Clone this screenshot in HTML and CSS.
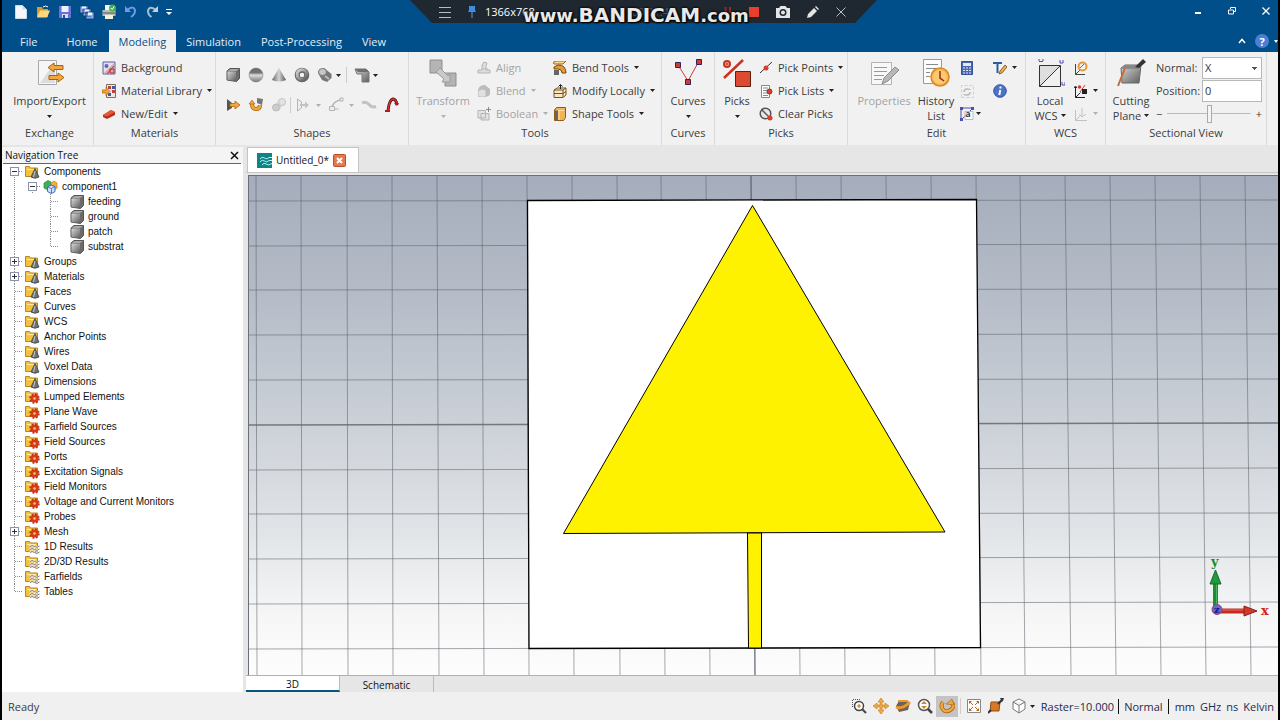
FILE: index.html
```html
<!DOCTYPE html>
<html lang="en">
<head>
<meta charset="utf-8">
<title>Untitled_0* - Modeling</title>
<link rel="stylesheet" href="styles.css">
</head>
<body>
<svg class="defs" aria-hidden="true">
  <defs>
    <linearGradient id="metal" x1="0" y1="0" x2="1" y2="1"><stop offset="0" stop-color="#d8d8d8"/><stop offset="1" stop-color="#5e5e5e"/></linearGradient>
    <linearGradient id="metalH" x1="0" y1="0" x2="1" y2="0"><stop offset="0" stop-color="#666"/><stop offset=".5" stop-color="#d4d4d4"/><stop offset="1" stop-color="#555"/></linearGradient>
    <linearGradient id="metalV" x1="0" y1="0" x2="0" y2="1"><stop offset="0" stop-color="#666"/><stop offset=".35" stop-color="#777"/><stop offset=".5" stop-color="#ddd"/><stop offset="1" stop-color="#777"/></linearGradient>
  </defs>
  <symbol id="j-line" viewBox="0 0 18 15"><path d="M9.500 0v15" class="dots"/></symbol>
  <symbol id="j-mid" viewBox="0 0 18 15"><path d="M9.500 0v15M10 7.500h8" class="dots"/></symbol>
  <symbol id="j-end" viewBox="0 0 18 15"><path d="M9.500 0v8M10 7.500h8" class="dots"/></symbol>
  <symbol id="j-plus" viewBox="0 0 18 15"><path d="M9.500 0v15M14 7.500h4" class="dots"/><rect x="5.500" y="3.500" width="8" height="8" fill="#fff" stroke="#8c93a8"/><path d="M7 7.500h5M9.500 5v5" stroke="#333"/></symbol>
  <symbol id="j-minus" viewBox="0 0 18 15"><path d="M9.500 11v4M14 7.500h4" class="dots"/><rect x="5.500" y="3.500" width="8" height="8" fill="#fff" stroke="#8c93a8"/><path d="M7 7.500h5" stroke="#333"/></symbol>
  <symbol id="folder" viewBox="0 0 15 14"><path d="M.5 11.500v-10h4l1 1.500h7v8.500z" fill="#f2c23e" stroke="#b98622"/><path d="M2 4.500h9" stroke="#ffe9a0"/></symbol>
  <symbol id="f-shape" viewBox="0 0 15 14"><use href="#folder"/><path d="M10 3.500L14 12q-4 2.500-8 0z" fill="#6f7276" stroke="#3e4043" stroke-width=".8"/><path d="M10 6l-1.500 6" stroke="#c9c9c9"/></symbol>
  <symbol id="f-gear" viewBox="0 0 15 14"><use href="#folder"/><circle cx="9.500" cy="8.500" r="4" fill="#d83a18" stroke="#c03014" stroke-width="2.500" stroke-dasharray="1.700 1.440"/><circle cx="9.500" cy="8.500" r="3.500" fill="#d83a18"/><circle cx="9.500" cy="8.500" r="1.300" fill="#f8c47a"/></symbol>
  <symbol id="f-wave" viewBox="0 0 15 14"><use href="#folder"/><path d="M5 6.500q2-2 4.500 0t5-.5M5 9.500q2-2 4.500 0t5-.5M5 12.500q2-2 4.500 0t5-.5" fill="none" stroke="#fff" stroke-width="2"/><path d="M5 6.500q2-2 4.500 0t5-.5M5 9.500q2-2 4.500 0t5-.5M5 12.500q2-2 4.500 0t5-.5" fill="none" stroke="#77706a"/></symbol>
  <symbol id="cube" viewBox="0 0 14 14"><path d="M1 3l3-2.500h9.500v10L10.500 13.500 1 12z" fill="#6c6c6c" stroke="#555"/><path d="M1.500 3.500h8.500v9.500L1.500 11.800z" fill="url(#metal)"/><path d="M2 3l2.500-2H13L10 3z" fill="#a9a9a9"/></symbol>
  <symbol id="comp" viewBox="0 0 15 14"><path d="M1 3l4-2.500L8 2v6L4 9.500 1 8z" fill="#3fae56" stroke="#2a8440" stroke-width=".7"/><path d="M8 3l3-2 3 2v5l-3 2-3-2z" fill="#f2ae3e" stroke="#c27f1c" stroke-width=".7"/><path d="M4.500 7l3.500-2 4 1.500v5L8.500 13.500l-4-2z" fill="#cfe0fa" stroke="#3a6cc0"/><path d="M4.500 7l4 1.500v5M8.500 8.500l3.500-2" fill="none" stroke="#3a6cc0" stroke-width=".8"/></symbol>
  <symbol id="caret" viewBox="0 0 5 3"><path d="M0 0h5L2.500 3z" fill="currentColor"/></symbol>
</svg>

<header class="title">
  <div class="quick">
    <button aria-label="New"><svg width="14" height="16"><path d="M1.500 1.500h7l4 4v9h-11z" fill="#f4f7fb" stroke="#cdd9e8"/><path d="M8.500 1.500v4h4" fill="#c9d6e6"/></svg></button>
    <button aria-label="Open"><svg width="16" height="16"><path d="M2 13V3h5l1 2h5v8z" fill="#d89a2c"/><path d="M2 13.500l3-7h10l-3 7z" fill="#ffd77c"/><path d="M8 3q3-2 5 0" fill="none" stroke="#fff"/></svg></button>
    <button aria-label="Save"><svg width="16" height="16"><path d="M2 2h12v12H2z" fill="#6870d4"/><path d="M4.500 2h7v6h-7z" fill="#eef1ff"/><path d="M5 10h6v4H5z" fill="#d9dcf4"/><path d="M6 11h2v3H6z" fill="#3b3f96"/></svg></button>
    <button aria-label="Save all"><svg width="16" height="16"><path d="M1 2h8v7H1zM4 5h8v7H4zM7 8h8v7H7z" fill="#8ea4e8" stroke="#003f75" stroke-width=".8"/><path d="M3 2.500h4v2H3zM6 5.500h4v2H6zM9 8.500h4v3H9z" fill="#f0f4ff"/></svg></button>
    <button aria-label="Print"><svg width="16" height="16"><path d="M4 1h8v6H4z" fill="#f2f5f8"/><path d="M1.500 6h13v6h-13z" fill="#b7bdb9"/><path d="M2 9h12" stroke="#4c5452"/><path d="M4 11h8v4H4z" fill="#f5efd8"/><circle cx="11.500" cy="4" r="3.500" fill="#45b14c"/><path d="M9.800 4l1.400 1.500 2-3" fill="none" stroke="#fff"/></svg></button>
    <button aria-label="Undo"><svg width="16" height="16"><path d="M4 6q7-5 8 0.500 0 4-4 6.500" fill="none" stroke="#6c9bea" stroke-width="2"/><path d="M2 2v6h6z" fill="#6c9bea"/></svg></button>
    <button aria-label="Redo"><svg width="16" height="16"><path d="M11 6Q4 1 3 7q0 4 3.500 6" fill="none" stroke="#a9bccb" stroke-width="2"/><path d="M13 2v6H7z" fill="#c3d2dd"/></svg></button>
    <button class="tiny" aria-label="Customize toolbar"><svg width="6" height="8"><path d="M0 1.500h6" stroke="#fff"/><path d="M0 4h6L3 7z" fill="#fff"/></svg></button>
  </div>
  <div class="window-buttons">
    <button aria-label="Minimize"><svg width="10" height="10"><path d="M2 7h6" stroke="#fff" stroke-width="2"/></svg></button>
    <button aria-label="Restore"><svg width="10" height="10"><path d="M3.500 3V1.500h5v4H7M1.500 4h5v4h-5z" fill="none" stroke="#fff"/></svg></button>
    <button aria-label="Close"><svg width="10" height="10"><path d="M1.500 1.500l7 7M8.500 1.500l-7 7" stroke="#fff" stroke-width="1.300"/></svg></button>
  </div>
  <div class="recorder">
    <button aria-label="Recorder menu"><svg width="12" height="12"><path d="M0 1.500h12M0 6.500h12M0 11.500h12" stroke="#b8bcc0"/></svg></button>
    <button aria-label="Pin"><svg width="8" height="12"><path d="M1 0h6v4l1 2H0l1-2z" fill="#3f8fe0"/><path d="M4 6v6" stroke="#5aa4ec"/></svg></button>
    <span class="size">1366x768</span>
    <span class="timer">00:01:45</span>
    <span class="rec-space"></span>
    <button aria-label="Pause"><svg width="8" height="10"><path d="M1.500 0v6M6 0v6" stroke="#9c2622" stroke-width="2"/></svg></button>
    <button aria-label="Stop"><svg width="10" height="10"><path d="M0 0h10v10H0z" fill="#e8402a"/></svg></button>
    <button aria-label="Take picture"><svg width="14" height="12"><path d="M0 2h3l1.500-2h5L11 2h3v10H0z" fill="#e3e5e7"/><circle cx="7" cy="6.500" r="3.500" fill="#1f2730"/><circle cx="7" cy="6.500" r="2" fill="#e3e5e7"/></svg></button>
    <button aria-label="Draw"><svg width="12" height="12"><path d="M0 12l1-4 6-6 3 3-6 6zM8 1l1-1 3 3-1 1z" fill="#e3e5e7"/></svg></button>
    <button aria-label="Close recorder"><svg width="10" height="10"><path d="M.5.500l9 9M9.500.500l-9 9" stroke="#b8bcc0"/></svg></button>
  </div>
  <div class="watermark"><span>www.</span><b>BANDICAM</b><span>.com</span></div>
</header>

<nav class="tabs">
  <button class="file">File</button><button class="home">Home</button><button class="on">Modeling</button><button>Simulation</button><button>Post-Processing</button><button>View</button>
  <div class="help">
    <button aria-label="Collapse ribbon"><svg width="8" height="6"><path d="M1 5l3-3.500L7 5" fill="none" stroke="#fff" stroke-width="1.500"/></svg></button>
    <button class="round" aria-label="Help">?</button>
    <button aria-label="Help menu"><svg width="4" height="3"><path d="M0 0h4L2 3z" fill="#fff"/></svg></button>
  </div>
</nav>

<section class="ribbon" aria-label="Modeling">
  <div class="group first">
    <div class="tools mid">
      <button class="big wide"><svg width="30" height="30"><path d="M3.500 2.500h18v24h-18z" fill="#f6f6f6" stroke="#a9a9a9"/><path d="M5 25l15-21v21z" fill="#dcdcdc"/><path d="M28 7.500H19V5l-6 4.500 6 4.500v-2.500h9zM14 17.500h9V15l6 4.500-6 4.500v-2.500h-9z" fill="#f4a63c" stroke="#a8640f"/></svg>Import/Export<svg class="caret"><use href="#caret"/></svg></button>
    </div>
    <h2>Exchange</h2>
  </div>

  <div class="group">
    <div class="tools pad8">
      <div class="col">
        <button class="row"><svg width="14" height="14"><path d="M1 1h12v12H1z" fill="#dfe2f6" stroke="#5a5f9a"/><path d="M2 12L12 2v10z" fill="#e7a2a2"/><circle cx="4.500" cy="5" r="2" fill="#6067b4"/><path d="M5 13l7-8" stroke="#b03434"/><path d="M8 8h4v4H8z" fill="none" stroke="#b03434"/></svg>Background</button>
        <button class="row"><svg width="14" height="14"><path d="M4.500.500h9v13h-9z" fill="#efe9e2" stroke="#7d6c60"/><path d="M6 2h3v3H6zM10 6h3v3h-3z" fill="#b9433c"/><path d="M10 2h3v3h-3zM6 9h3v3H6z" fill="#4b5597"/><path d="M0 6h4V3.500L8 7.500l-4 4V9H0z" fill="#f2a338" stroke="#a8640f" stroke-width=".7"/></svg>Material Library<svg class="caret"><use href="#caret"/></svg></button>
        <button class="row"><svg width="14" height="14"><path d="M1 8l8-5 4 2v3l-8 4-4-2z" fill="#b72e16"/><path d="M1 8l8-5 4 2-8 4.500z" fill="#e8593a"/></svg>New/Edit<svg class="caret"><use href="#caret"/></svg></button>
      </div>
    </div>
    <h2>Materials</h2>
  </div>

  <div class="group">
    <div class="tools stack">
      <div class="icons">
        <button aria-label="Brick"><svg width="14" height="14"><use href="#cube"/></svg></button>
        <button aria-label="Sphere"><svg width="16" height="16"><circle cx="8" cy="8" r="7" fill="url(#metalV)" stroke="#777" stroke-width=".5"/></svg></button>
        <button aria-label="Cone"><svg width="16" height="16"><path d="M8 1l7 12q-7 3-14 0z" fill="url(#metalH)"/></svg></button>
        <button aria-label="Torus"><svg width="16" height="16"><circle cx="8" cy="8" r="4.800" fill="none" stroke="#666" stroke-width="5"/><circle cx="8" cy="7.500" r="4.800" fill="none" stroke="url(#metal)" stroke-width="3"/></svg></button>
        <button aria-label="Cylinder"><svg width="16" height="16"><path d="M2 3.500L7 1l7.500 6v4l-4.500 4-5-2-3.500-6z" fill="#777"/><ellipse cx="5.500" cy="5" rx="4" ry="3.500" fill="#c7c7c7" stroke="#777"/><path d="M8 9l4 3" stroke="#bbb" stroke-width="2"/></svg></button>
        <button class="drop" aria-label="More shapes"><svg class="caret"><use href="#caret"/></svg></button>
        <i></i>
        <button aria-label="Bend"><svg width="16" height="16"><path d="M1 2h11l3 3v10H8V7H3z" fill="url(#metal)" stroke="#777"/><path d="M1 2h11l3 3H4z" fill="#6e6e6e"/></svg></button>
        <button class="drop" aria-label="More bends"><svg class="caret"><use href="#caret"/></svg></button>
      </div>
      <div class="icons second">
        <button aria-label="Extrude"><svg width="16" height="16"><path d="M2 2l5 4v5l-5 3z" fill="#555"/><path d="M5 6.500h5V4l5 4-5 4V9.500H5z" fill="#f4a63c" stroke="#a8640f" stroke-width=".8"/></svg></button>
        <button aria-label="Rotate"><svg width="16" height="16"><path d="M9 1l6 1-1 6-5-2z" fill="#777"/><path d="M12 8q0 4-4 4T4 7" fill="none" stroke="#a8640f" stroke-width="4"/><path d="M12 8q0 4-4 4T4 7" fill="none" stroke="#f4a63c" stroke-width="2.500"/><path d="M1 7l3-4 3 4z" fill="#f4a63c" stroke="#a8640f" stroke-width=".6"/></svg></button>
        <button aria-label="Loft" disabled><svg width="16" height="16"><path d="M2 10l7-8 5 3-6 9z" fill="#dadada"/><circle cx="5" cy="10.500" r="3.500" fill="#ccc" stroke="#bbb"/><circle cx="11" cy="5" r="3.500" fill="#e2e2e2" stroke="#c4c4c4"/></svg></button>
        <i></i>
        <button aria-label="Face extrude" disabled><svg width="14" height="14"><path d="M1.500 1v12l4-3V4z" fill="#eee" stroke="#b4b4b4"/><path d="M4 6h5V3.500L13 7l-4 3.500V8H4z" fill="#c2c2c2"/></svg></button>
        <button class="drop" disabled aria-label="More extrusions"><svg class="caret"><use href="#caret"/></svg></button>
        <button aria-label="Sweep curve" disabled><svg width="16" height="16"><path d="M4 11q1-7 9-8" fill="none" stroke="#b4b4b4" stroke-width="1.500"/><path d="M12 1h3v3h-3zM1.500 9.500h5v4h-5zM6.500 12h4" fill="#eee" stroke="#b4b4b4"/></svg></button>
        <button class="drop" disabled aria-label="More sweeps"><svg class="caret"><use href="#caret"/></svg></button>
        <button aria-label="Trace" disabled><svg width="16" height="16"><path d="M1 6q4-2 7 1.500t7 2" fill="none" stroke="#c2c2c2" stroke-width="3"/></svg></button>
        <button aria-label="Bond wire"><svg width="14" height="16"><path d="M3 14Q4 3 8 2q3 0 4 6" fill="none" stroke="#4d1010" stroke-width="3"/><path d="M3 14Q4 3 8 2q3 0 4 5" fill="none" stroke="#d43030" stroke-width="1.500"/><path d="M0 13h5v2H0zM9 6h5l-2 3z" fill="#b11d1d"/></svg></button>
      </div>
    </div>
    <h2>Shapes</h2>
  </div>

  <div class="group">
    <div class="tools pad6">
      <button class="big w56" disabled><svg width="30" height="30"><path d="M2 2h12v13H2zM17 15h11v13H17z" fill="#b4b4b4" stroke="#8e8e8e"/><path d="M12 10l8 8 2-2v8h-8l2-3-8-7z" fill="#c9c9c9" stroke="#9b9b9b"/></svg>Transform<svg class="caret"><use href="#caret"/></svg></button>
      <div class="col c76">
        <button class="row" disabled><svg width="14" height="14"><path d="M1 12h12v-3H9V5l1-3-3-1-2 3v5H1z" fill="#ddd" stroke="#b4b4b4"/><path d="M5 8h6" stroke="#bbb"/></svg>Align</button>
        <button class="row" disabled><svg width="14" height="14"><path d="M1 6q1-5 7-5l5 4v6l-4 2H1z" fill="#bcbcbc"/><path d="M1.500 7q5-3 7 0v5.500h-7z" fill="#e0e0e0"/></svg>Blend<svg class="caret"><use href="#caret"/></svg></button>
        <button class="row" disabled><svg width="14" height="14"><path d="M1 3.500h7.500V11H1zM4 6.500h8V13H4z" fill="#e2e2e2" stroke="#b4b4b4"/><path d="M9 2.500h5M11.500 0v5" stroke="#8a8a8a"/></svg>Boolean<svg class="caret"><use href="#caret"/></svg></button>
      </div>
      <div class="col">
        <button class="row"><svg width="14" height="14"><path d="M0 1.500L3 0h10l-3 3H1z" fill="#ffd48e" stroke="#a8640f"/><path d="M1 6l4-2q8 0 8 8h-4q0-4-4-4H1z" fill="#e99a35" stroke="#6d4a1f"/><path d="M1 9h5v5H1z" fill="#666"/></svg>Bend Tools<svg class="caret"><use href="#caret"/></svg></button>
        <button class="row"><svg width="14" height="14"><path d="M1 6l3-2h9v7l-3 2.500H1zM1 6h9v7M10 6l3-2M1 9.500h9l3-2" fill="#fbe6c3" stroke="#7a5220"/><path d="M7.500 5V1M5.500 2.500l2-2 2 2" fill="none" stroke="#222"/></svg>Modify Locally<svg class="caret"><use href="#caret"/></svg></button>
        <button class="row"><svg width="14" height="14"><path d="M1.500 3l2-2.500h9v10l-2 3h-9z" fill="#f0b458" stroke="#8d5b16"/><path d="M2 3.500h3v10H2z" fill="#6b6460"/><path d="M5 3.500h6M6 4v9" stroke="#ffe0a6"/></svg>Shape Tools<svg class="caret"><use href="#caret"/></svg></button>
      </div>
    </div>
    <h2>Tools</h2>
  </div>

  <div class="group">
    <div class="tools mid">
      <button class="big"><svg width="30" height="30"><path d="M5 7l10 16L26 3" fill="none" stroke="#d23a34"/><path d="M2.500 4.500h5v5h-5zM12.500 21.500h5v5h-5zM23.500 1.500h5v5h-5z" fill="#d23a34" stroke="#33205c"/></svg>Curves<svg class="caret"><use href="#caret"/></svg></button>
    </div>
    <h2>Curves</h2>
  </div>

  <div class="group">
    <div class="tools">
      <button class="big w44"><svg width="30" height="30"><circle cx="5" cy="6" r="3" fill="#f1a79c" stroke="#c8321e" stroke-width="2"/><circle cx="5" cy="6" r="1" fill="#c8321e"/><path d="M2 20L21 2" stroke="#c8321e" stroke-width="2.500"/><path d="M13.500 13.500h15v15h-15z" fill="#dc4a30" stroke="#5d2015"/></svg>Picks<svg class="caret"><use href="#caret"/></svg></button>
      <div class="col">
        <button class="row"><svg width="14" height="14"><path d="M1 12L13 1" stroke="#333"/><circle cx="7" cy="7" r="2.500" fill="#d8402c"/></svg>Pick Points<svg class="caret"><use href="#caret"/></svg></button>
        <button class="row"><svg width="14" height="14"><path d="M2.500 1.500h8v12h-8z" fill="#fff" stroke="#888"/><path d="M4 4h5M4 6.500h5M4 9h5M4 11.500h5" stroke="#888"/><circle cx="10.500" cy="7.500" r="2.500" fill="#d8402c" stroke="#8d2a3a"/></svg>Pick Lists<svg class="caret"><use href="#caret"/></svg></button>
        <button class="row"><svg width="14" height="14"><circle cx="6.500" cy="6.500" r="5.300" fill="#e7e7e7" stroke="#555" stroke-width="1.500"/><path d="M3 3l7 7" stroke="#555" stroke-width="1.500"/><circle cx="11" cy="11" r="2.500" fill="#d8402c"/></svg>Clear Picks</button>
      </div>
    </div>
    <h2>Picks</h2>
  </div>

  <div class="group">
    <div class="tools pad6">
      <button class="big w60" disabled><svg width="30" height="30"><path d="M2.500 4.500h20v22h-20z" fill="#f8f8f8" stroke="#b4b4b4"/><path d="M5 9.500h13M5 13.500h13M5 17.500h10M5 21.500h8" stroke="#999"/><path d="M13 26l2-6L26 9l4 3-11 11z" fill="#b8b8b8" stroke="#8c8c8c"/></svg>Properties</button>
      <button class="big w44"><svg width="30" height="30"><path d="M2.500 1.500h18v24h-18z" fill="#fdfdfd" stroke="#999"/><path d="M5 6.500h12M5 10.500h10M5 14.500h4M5 18.500h4" stroke="#888"/><circle cx="19" cy="19" r="9" fill="#f8b448" stroke="#d88a1c" stroke-width="1.500"/><circle cx="19" cy="19" r="7" fill="#fbc873"/><path d="M19 13v7l4 3" fill="none" stroke="#9b2c16" stroke-width="1.500"/></svg><span>History</span><span>List</span></button>
      <div class="col c33 gap2">
        <button class="row" aria-label="Calculator"><svg width="14" height="14"><path d="M1.500.500h11v13h-11z" fill="#4c66ac" stroke="#36509a"/><path d="M3 2h8v3H3z" fill="#dfe7fb"/><path d="M3 7h8M3 9.500h8M3 12h8" stroke="#dfe7fb" stroke-dasharray="2 1"/></svg></button>
        <button class="row" aria-label="Update" disabled><svg width="14" height="14"><path d="M1.500 13.500v-12h12v12z" fill="none" stroke="#cfcfcf" stroke-dasharray="3 2"/><path d="M4 8q0-3 3-3t3 1M10 8q0 3-3 3t-3-1" fill="none" stroke="#bbb" stroke-width="1.500"/></svg></button>
        <button class="row" aria-label="Parameters"><svg width="14" height="14"><path d="M1 1v12M1 1h12M1 13L5 9M9 5l4-4" stroke="#4a4fae"/><path d="M0 0h3v3H0zM11 0h3v3h-3zM0 11h3v3H0z" fill="#4a4fae"/><path d="M5 4.500h8v8H5z" fill="#fff" stroke="#bbb"/></svg><small>a</small><svg class="caret"><use href="#caret"/></svg></button>
      </div>
      <div class="col">
        <button class="row" aria-label="Text edit"><svg width="14" height="14"><path d="M0 2h9M4.500 2v10" stroke="#2d5c9e" stroke-width="2"/><path d="M6 13l1-3 5-6 2 2-5 6z" fill="#f0b040" stroke="#6d4a1f" stroke-width=".8"/></svg><svg class="caret"><use href="#caret"/></svg></button>
        <button class="row" aria-label="Information"><svg width="14" height="14"><circle cx="7" cy="7" r="6.300" fill="#4a72c6" stroke="#2e53a4"/><path d="M7.500 2.500v2M7.300 6l-1 5" stroke="#fff" stroke-width="2"/></svg></button>
      </div>
    </div>
    <h2>Edit</h2>
  </div>

  <div class="group">
    <div class="tools">
      <button class="big w48"><svg width="30" height="30"><path d="M4.500 7.500h21v21h-21z" fill="#f0f0f0" stroke="#333"/><path d="M5 28V8h20z" fill="#dedede"/><path d="M4.500 28.500L25 8" stroke="#333"/><path d="M4 1v2l1 1 1-1 1 1 1-1V1M25 2v3h3V2M27 24v3h3v-3" fill="none" stroke="#4a4fae"/></svg><span>Local</span><span>WCS <svg class="caret"><use href="#caret"/></svg></span></button>
      <div class="col">
        <button class="row" aria-label="Rotate WCS"><svg width="14" height="14"><path d="M1.500 3v10.500H11M1.500 13.500l5-5" fill="none" stroke="#444"/><circle cx="8.500" cy="5.500" r="4" fill="none" stroke="#e39a3c" stroke-width="2"/><path d="M6 7l4-4" stroke="#a8640f"/></svg></button>
        <button class="row" aria-label="Align WCS"><svg width="14" height="14"><path d="M1.500 3v10.500H11M1.500 13.500l5-5M0 4l1.500-2L3 4" fill="none" stroke="#222"/><circle cx="5.500" cy="3" r="1.700" fill="#d33"/><path d="M6 8l5-7" stroke="#d33"/><path d="M8 5h5v5H8z" fill="#222"/></svg><svg class="caret"><use href="#caret"/></svg></button>
        <button class="row" aria-label="Store WCS" disabled><svg width="14" height="14"><path d="M1.500 3v10.500H13M1.500 13.500l5-5M8 1v8M5 7l3 3 4-3" fill="none" stroke="#c2c2c2"/></svg><svg class="caret"><use href="#caret"/></svg></button>
      </div>
    </div>
    <h2>WCS</h2>
  </div>

  <div class="group">
    <div class="tools">
      <button class="big w50"><svg width="30" height="30"><path d="M5 10l4-3h16l-2 18H6z" fill="url(#metal)" stroke="#666"/><path d="M5 11h17l3-4H9z" fill="#888"/><path d="M2 28L9 10" stroke="#c86a38" stroke-width="2"/><path d="M19 9l8-8 3 3-7 6z" fill="#333"/></svg><span>Cutting</span><span>Plane <svg class="caret"><use href="#caret"/></svg></span></button>
      <div class="plane">
        <label for="normal">Normal:</label><select id="normal"><option>X</option><option>Y</option><option>Z</option></select>
        <label for="position">Position:</label><input id="position" type="text" value="0">
        <div class="slide"><span>−</span><input type="range" aria-label="Plane position" value="50"><span>+</span></div>
      </div>
    </div>
    <h2>Sectional View</h2>
  </div>
  <div class="group rest"></div>
</section>

<main>
  <aside>
    <div class="aside-head"><h1>Navigation Tree</h1><button aria-label="Close tree"><svg width="9" height="9"><path d="M1 1l7 7M8 1L1 8" stroke="#111" stroke-width="1.500"/></svg></button></div>
    <ul class="tree">
      <li><svg class="j"><use href="#j-minus"/></svg><svg class="ic"><use href="#f-shape"/></svg>Components</li>
      <li><svg class="j"><use href="#j-line"/></svg><svg class="j"><use href="#j-minus"/></svg><svg class="ic"><use href="#comp"/></svg>component1</li>
      <li class="leaf"><svg class="j"><use href="#j-line"/></svg><svg class="j"></svg><svg class="j"><use href="#j-mid"/></svg><svg class="ic"><use href="#cube"/></svg>feeding</li>
      <li class="leaf"><svg class="j"><use href="#j-line"/></svg><svg class="j"></svg><svg class="j"><use href="#j-mid"/></svg><svg class="ic"><use href="#cube"/></svg>ground</li>
      <li class="leaf"><svg class="j"><use href="#j-line"/></svg><svg class="j"></svg><svg class="j"><use href="#j-mid"/></svg><svg class="ic"><use href="#cube"/></svg>patch</li>
      <li class="leaf"><svg class="j"><use href="#j-line"/></svg><svg class="j"></svg><svg class="j"><use href="#j-end"/></svg><svg class="ic"><use href="#cube"/></svg>substrat</li>
      <li><svg class="j"><use href="#j-plus"/></svg><svg class="ic"><use href="#f-shape"/></svg>Groups</li>
      <li><svg class="j"><use href="#j-plus"/></svg><svg class="ic"><use href="#f-shape"/></svg>Materials</li>
      <li><svg class="j"><use href="#j-mid"/></svg><svg class="ic"><use href="#f-shape"/></svg>Faces</li>
      <li><svg class="j"><use href="#j-mid"/></svg><svg class="ic"><use href="#f-shape"/></svg>Curves</li>
      <li><svg class="j"><use href="#j-mid"/></svg><svg class="ic"><use href="#f-shape"/></svg>WCS</li>
      <li><svg class="j"><use href="#j-mid"/></svg><svg class="ic"><use href="#f-shape"/></svg>Anchor Points</li>
      <li><svg class="j"><use href="#j-mid"/></svg><svg class="ic"><use href="#f-shape"/></svg>Wires</li>
      <li><svg class="j"><use href="#j-mid"/></svg><svg class="ic"><use href="#f-shape"/></svg>Voxel Data</li>
      <li><svg class="j"><use href="#j-mid"/></svg><svg class="ic"><use href="#f-shape"/></svg>Dimensions</li>
      <li><svg class="j"><use href="#j-mid"/></svg><svg class="ic"><use href="#f-gear"/></svg>Lumped Elements</li>
      <li><svg class="j"><use href="#j-mid"/></svg><svg class="ic"><use href="#f-gear"/></svg>Plane Wave</li>
      <li><svg class="j"><use href="#j-mid"/></svg><svg class="ic"><use href="#f-gear"/></svg>Farfield Sources</li>
      <li><svg class="j"><use href="#j-mid"/></svg><svg class="ic"><use href="#f-gear"/></svg>Field Sources</li>
      <li><svg class="j"><use href="#j-mid"/></svg><svg class="ic"><use href="#f-gear"/></svg>Ports</li>
      <li><svg class="j"><use href="#j-mid"/></svg><svg class="ic"><use href="#f-gear"/></svg>Excitation Signals</li>
      <li><svg class="j"><use href="#j-mid"/></svg><svg class="ic"><use href="#f-gear"/></svg>Field Monitors</li>
      <li><svg class="j"><use href="#j-mid"/></svg><svg class="ic"><use href="#f-gear"/></svg>Voltage and Current Monitors</li>
      <li><svg class="j"><use href="#j-mid"/></svg><svg class="ic"><use href="#f-gear"/></svg>Probes</li>
      <li><svg class="j"><use href="#j-plus"/></svg><svg class="ic"><use href="#f-gear"/></svg>Mesh</li>
      <li><svg class="j"><use href="#j-mid"/></svg><svg class="ic"><use href="#f-wave"/></svg>1D Results</li>
      <li><svg class="j"><use href="#j-mid"/></svg><svg class="ic"><use href="#f-wave"/></svg>2D/3D Results</li>
      <li><svg class="j"><use href="#j-mid"/></svg><svg class="ic"><use href="#f-wave"/></svg>Farfields</li>
      <li><svg class="j"><use href="#j-end"/></svg><svg class="ic"><use href="#f-wave"/></svg>Tables</li>
    </ul>
  </aside>

  <section class="doc">
    <div class="doc-tabs">
      <div class="doc-tab"><svg width="15" height="15"><path d="M0 0h15v15H0z" fill="#0c8488"/><path d="M3 6q2-3 4.500-1T12 4.500h3M3 9q2-3 4.500-1T12 7.500h3M5 12q2-3 4-1t6-.5" fill="none" stroke="#b5eeee"/></svg><span>Untitled_0*</span><button aria-label="Close document"><svg width="13" height="13"><rect x=".5" y=".5" width="12" height="12" rx="1" fill="#e5784c" stroke="#b8502a"/><path d="M4 4l5 5M9 4L4 9" stroke="#fff" stroke-width="2"/></svg></button></div>
    </div>
    <div class="view">
      <svg viewBox="249 176 1029 499" preserveAspectRatio="xMinYMin slice" role="img" aria-label="Antenna model, front view">
        <path d="M256 176L257 675M301 176L302 675M347 176L348 675M392 176L393 675M437 176L439 675M482 176L484 675M527 176L529 675M572 176L574 675M617 176L620 675M661 176L665 675M706 176L710 675M796 176L800 675M841 176L845 675M886 176L890 675M931 176L935 675M976 176L981 675M1020 176L1025 675M1065 176L1071 675M1110 176L1116 675M1155 176L1161 675M1200 176L1206 675M1245 176L1251 675M249 201L1278 200M249 246L1278 244M249 290L1278 289M249 335L1278 334M249 380L1278 379M249 470L1278 468M249 514L1278 513M249 559L1278 557M249 604L1278 602M249 649L1278 647" class="grid"/>
        <path d="M751 176L755 675M249 425L1278 423" class="grid axis"/>
        <path d="M527.500 200.500L976.500 199.500 980.500 647.500 529 648.500z" fill="#fff" stroke="#000" stroke-width="1.300"/>
        <path d="M752.500 205.500L945 532 563.500 533.500z" fill="#fff200" stroke="#000"/>
        <path d="M747.500 533h14V648h-13z" fill="#fff200" stroke="#000"/>
        <path d="M1215.500 609v-26" stroke="#1d8c35" stroke-width="5"/><path d="M1216.500 606v-22" stroke="#42b95a" stroke-width="1"/>
        <path d="M1215.500 570l5.500 14h-11z" fill="#1f9a3c" stroke="#176b2b"/>
        <path d="M1217 611h28" stroke="#c42b22" stroke-width="5"/><path d="M1220 610h24" stroke="#ee6a5a"/>
        <path d="M1257 611l-13-5v10z" fill="#d2382b" stroke="#82201a"/>
        <circle cx="1217" cy="609.500" r="5" fill="#6468d0" stroke="#8c4a70"/>
        <text x="1211" y="566" class="ax" fill="#178a2c">y</text>
        <text x="1261" y="615" class="ax" fill="#d1231b">x</text>
        <text x="1214" y="613" class="ax z" fill="#12148a">z</text>
      </svg>
    </div>
    <div class="view-tabs"><button class="on">3D</button><button>Schematic</button></div>
  </section>
</main>

<footer>
  <span class="ready">Ready</span>
  <div class="view-tools">
    <button aria-label="Zoom window"><svg width="16" height="16"><path d="M1.500 9V1.500H10" fill="none" stroke="#555" stroke-dasharray="1 1"/><circle cx="8" cy="8" r="4.500" fill="#fff" stroke="#444" stroke-width="1.500"/><path d="M6 8h4M8 6v4" stroke="#c07010"/><path d="M11 11l4 4" stroke="#444" stroke-width="2"/></svg></button>
    <button aria-label="Pan"><svg width="16" height="16"><path d="M8 0l3 4H9v3h3V5l4 3-4 3V9H9v3h2l-3 4-3-4h2V9H4v2L0 8l4-3v2h3V4H5z" fill="#efa844" stroke="#c47a1c" stroke-width=".6"/></svg></button>
    <button aria-label="Rotate"><svg width="16" height="16"><path d="M1 8l3-5 11 1-2 8-9 2z" fill="#6b6258"/><path d="M1 9q6 3 14-5" fill="none" stroke="#eb972c" stroke-width="3"/><path d="M3 3h10" stroke="#eb972c" stroke-width="2"/></svg></button>
    <button aria-label="Zoom"><svg width="16" height="16"><circle cx="7" cy="7" r="5.500" fill="#fff" stroke="#555" stroke-width="1.500"/><path d="M4 6h6L7 3zM4 8h6l-3 3z" fill="#d88420"/><path d="M11 11l4 4" stroke="#444" stroke-width="2.500"/></svg></button>
    <button class="active" aria-label="Rotate in plane"><svg width="16" height="16"><path d="M4 4q-3 4 0 7.500t8 0 0-7" fill="none" stroke="#a8640f" stroke-width="4"/><path d="M4 4q-3 4 0 7.500t8 0 0-7" fill="none" stroke="#f0a540" stroke-width="2.500"/><path d="M7 6l6-5 2 6z" fill="#f0a540" stroke="#a8640f" stroke-width=".6"/></svg></button>
    <i></i>
    <button aria-label="Fit view"><svg width="14" height="14"><path d="M.5.500h13v13H.5z" fill="#fff" stroke="#888"/><path d="M3 3l3 3M11 3L8 6M3 11l3-3M11 11L8 8" stroke="#b8681a"/><path d="M2 2h3L2 5zM12 2v3L9 2zM2 12V9l3 3zM12 12H9l3-3z" fill="#b8681a"/></svg></button>
    <button aria-label="Cutting plane view"><svg width="16" height="16"><path d="M3 4h9l-1 9H2z" fill="#d87a24" stroke="#8d4d12"/><path d="M0 15l3-3M10 6l5-5" stroke="#333" stroke-width="2"/><path d="M12 0h4l-2 4z" fill="#333"/></svg></button>
    <button class="cube" aria-label="View orientation"><svg width="16" height="16"><path d="M8 1l6 3v7l-6 4-6-4V4zM2 4l6 3.500L14 4M8 7.500V15" fill="#fff" stroke="#777"/></svg><svg class="caret"><use href="#caret"/></svg></button>
  </div>
  <span class="cell">Raster=10.000</span><span class="cell mode">Normal</span><span class="units"><span>mm</span><span>GHz</span><span>ns</span><span>Kelvin</span></span>
</footer>
</body>
</html>
```

FILE: styles.css
```css
* { box-sizing: border-box; }
body {
  margin: 0;
  min-height: 100vh;
  display: flex;
  flex-direction: column;
  border: solid #000;
  border-width: 0 2px;
  background: #e6e6e6;
  color: #3c3c3c;
  font: 11px/15px "Open Sans", "Noto Sans", sans-serif;
}
button {
  display: flex;
  align-items: center;
  justify-content: center;
  margin: 0;
  padding: 0;
  border: 0;
  background: none;
  color: inherit;
  font: inherit;
  white-space: nowrap;
}
button:disabled { color: #a3a3a3; }
svg { flex: none; display: block; }
h1, h2 { margin: 0; font: inherit; }
.defs { position: absolute; width: 0; height: 0; }
.dots { fill: none; stroke: #8a8a8a; stroke-dasharray: 1 1; }
.caret { width: 5px; height: 3px; color: #222; }
:disabled .caret { color: #b0b0b0; }

/* title bar */
.title { position: relative; display: flex; justify-content: space-between; height: 30px; background: #004f8b; }
.quick { display: flex; align-items: center; height: 24px; padding-left: 8px; }
.quick button { width: 22px; }
.quick .tiny { width: 10px; }
.window-buttons { display: flex; align-items: center; height: 22px; padding-right: 7px; }
.window-buttons button { width: 34px; }
.window-buttons button:last-child { width: 10px; margin-left: 12px; }
.recorder {
  position: absolute; top: 0; left: 408px;
  display: flex; align-items: center; gap: 17px;
  width: 467px; height: 23px; padding: 0 31px 0 29px;
  background: #1f2730;
  clip-path: polygon(0 0, 100% 0, 445px 100%, 22px 100%);
  color: #fff;
}
.recorder .size { margin-left: -8px; }
.timer { margin-left: 80px; color: #58616a; }
.rec-space { flex: 1; }
.watermark {
  position: absolute; top: 3px; left: 521px;
  display: flex; align-items: baseline;
  color: #e9e9e9;
  font: bold 18px/24px "DejaVu Sans", sans-serif;
  text-shadow: 0 0 2px #000, 0 0 3px #000, 1px 1px 2px #000;
}
.watermark b { font-size: 20px; }

/* ribbon tabs */
.tabs { display: flex; height: 22px; background: #004f8b; color: #e4edf5; }
.tabs > button { padding: 0 10px; }
.tabs .file { padding: 0 18px; }
.tabs .home { padding: 0 11px; }
.tabs .on { background: #f1f1f1; color: #0b4f8a; }
.help { display: flex; align-items: center; gap: 9px; margin-left: auto; }
.help .round { width: 14px; height: 14px; border-radius: 50%; background: #4a7fd4; color: #fff; font-weight: bold; }
.help button:last-child { margin-left: -4px; }

/* ribbon */
.ribbon {
  display: grid;
  grid-template-columns: 92px 122px 193px 253px 53px 133px 178px 80px 161px 1fr;
  height: 93px;
  background: #f1f1f1;
}
.group { display: flex; flex-direction: column; padding-top: 4px; border-right: 1px solid #dadada; }
.group.first { padding-left: 4px; }
.group.rest { border: 0; }
.group h2 { height: 16px; text-align: center; }
.tools { display: flex; height: 69px; }
.tools.mid { justify-content: center; }
.pad8 { padding-left: 8px; }
.pad6 { padding-left: 6px; }
.big { flex-direction: column; justify-content: flex-start; padding-top: 2px; width: 46px; }
.big > svg:first-child { margin-bottom: 5px; }
.big > .caret { margin-top: 7px; }
.big span { display: flex; align-items: center; gap: 3px; }
.wide { width: 84px; }
.w44 { width: 44px; }
.w48 { width: 48px; }
.w50 { width: 50px; }
.w56 { width: 56px; }
.w60 { width: 60px; }
.col { display: flex; flex-direction: column; align-items: flex-start; }
.c76 { width: 76px; margin-left: 6px; }
.c33 { width: 33px; }
.gap2 { margin-left: 2px; }
.row { height: 23px; gap: 5px; }
.row small { width: 6px; margin-left: -14px; font-size: 9px; font-weight: bold; }
.stack { flex-direction: column; padding-left: 5px; padding-top: 4px; }
.icons { display: flex; align-items: center; height: 30px; }
.icons button { width: 23px; }
.icons .drop { width: 8px; margin-left: -2px; }
.icons i { width: 1px; height: 16px; margin: 0 3px 0 4px; background: #ccc; }
.icons.second i { margin: 0; }
.icons.second .drop { width: 12px; }
.plane {
  display: grid;
  grid-template-columns: 46px 60px;
  grid-template-rows: 23px 23px 23px;
  align-items: center;
}
.plane select, .plane input[type=text] {
  width: 60px; height: 22px; padding: 0 2px;
  border: 1px solid #b8b8b8; border-radius: 0;
  background: #fff; color: #333; font: inherit;
}
.plane select {
  appearance: none;
  background: linear-gradient(#555, #555) 49px 9px / 5px 1px no-repeat, linear-gradient(#555, #555) 50px 10px / 3px 1px no-repeat, linear-gradient(#555, #555) 51px 11px / 1px 1px no-repeat, #fff;
}
.slide { grid-column: 1 / 3; display: flex; align-items: center; gap: 5px; }
.slide input { appearance: none; flex: 1; min-width: 0; height: 20px; margin: 0; background: linear-gradient(#bbb, #bbb) center / 100% 1px no-repeat; }
.slide input::-webkit-slider-thumb { appearance: none; width: 5px; height: 18px; border: 1px solid #aaa; background: #f4f4f4; }

/* work area */
main { flex: 1; display: grid; grid-template-columns: 241px 1fr; gap: 3px; padding-top: 2px; }
aside { display: flex; flex-direction: column; background: #fff; color: #111; font: 10px/15px "Liberation Sans", Arial, sans-serif; }
.aside-head { display: flex; justify-content: space-between; align-items: center; height: 16px; padding: 0 4px 0 3px; background: #f4f4f4; }
.aside-head h1 { font: 10px/15px "Open Sans", sans-serif; }
.tree { flex: 1; margin: 0 2px 0 1px; padding: 0 0 0 2px; border-top: 1px solid #666; list-style: none; }
.tree li { display: flex; align-items: center; height: 15px; }
.tree .j { width: 18px; height: 15px; }
.tree .ic { width: 15px; height: 14px; margin: 0 4px 0 2px; }
.tree .leaf .ic { width: 14px; margin-left: 11px; }
.doc { display: flex; flex-direction: column; min-width: 0; }
.doc-tabs { display: flex; height: 26px; margin-bottom: 2px; border-bottom: 1px solid #c4c4c4; }
.doc-tab { display: flex; align-items: center; gap: 4px; margin-left: 1px; padding: 0 12px 0 9px; border: 1px solid #c4c4c4; border-bottom: 0; background: #fff; color: #111; font: 10px/15px "Open Sans", sans-serif; }
.view {
  flex: 1; position: relative; min-height: 300px; margin-left: 2px;
  border: solid #6a7078; border-width: 1px 0 0 1px;
  background: linear-gradient(#a5adbc, #b6bdc8 25%, #ccd1d8 50%, #e2e5e8 72%, #f6f6f7 88%, #fdfdfd);
}
.view svg { position: absolute; inset: 0; width: 100%; height: 100%; }
.grid { fill: none; stroke: #5b626a; stroke-opacity: .55; stroke-width: 1; }
.axis { stroke-opacity: .8; stroke-width: 1.5; }
.ax { font: bold 13px "DejaVu Serif", serif; }
.ax.z { font-size: 10px; }
.view-tabs { display: flex; height: 17px; border-top: 1px solid #b0b0b0; color: #111; font-size: 10px; }
.view-tabs button { width: 94px; padding-top: 2px; border-right: 1px solid #bbb; }
.view-tabs .on { padding-top: 3px; background: #fff; border-bottom: 2px solid #08557e; }

/* status bar */
footer { display: flex; align-items: center; height: 28px; padding: 0 4px 0 6px; background: #f0f0f0; }
.ready { margin-right: auto; }
.view-tools { display: flex; align-items: center; margin-right: 4px; }
.view-tools button { width: 22px; height: 21px; }
.view-tools .active { background: #c4c4c4; }
.view-tools i { width: 1px; height: 16px; margin: 0 2px; background: #d8c8c8; }
.view-tools .cube { width: 28px; gap: 3px; margin-left: 2px; }
.cell { padding-right: 4px; border-right: 1px solid #111; color: #1d2b50; }
.mode { padding: 0 5px; }
.units { display: flex; gap: 5px; padding-left: 6px; color: #1d2b50; }
```
